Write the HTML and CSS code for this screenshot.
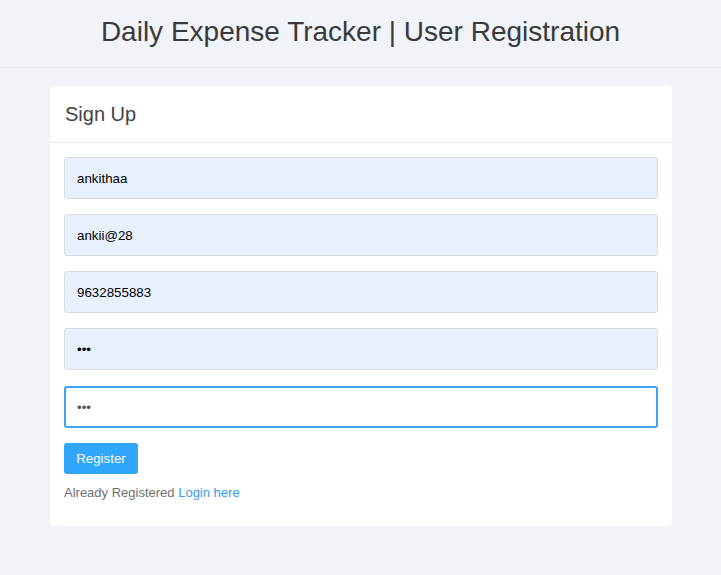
FILE: index.html
```html
<!DOCTYPE html>
<html>
<head>
<meta charset="utf-8">
<link rel="stylesheet" href="styles.css">
</head>
<body>
<header class="topbar">
  <h1 class="title">Daily Expense Tracker | User Registration</h1>
</header>
<main class="wrap">
  <section class="card">
    <div class="card-head">Sign Up</div>
    <form class="card-body">
      <input class="field" type="text" value="ankithaa">
      <input class="field" type="text" value="ankii@28">
      <input class="field" type="text" value="9632855883">
      <input class="field" type="password" value="abc">
      <input class="field focus" type="password" value="abc">
      <button class="btn" type="button">Register</button>
      <p class="note">Already Registered <a href="#" class="link">Login here</a></p>
    </form>
  </section>
</main>
</body>
</html>
```

FILE: styles.css
```css
html, body {
  margin: 0;
  padding: 0;
}
body {
  background: #f0f3f7;
  font-family: "Liberation Sans", Arial, sans-serif;
  color: #333;
}
.topbar {
  height: 67px;
  border-bottom: 1px solid #e4e8ec;
  display: flex;
  align-items: center;
  justify-content: center;
}
.title {
  margin: 0;
  font-weight: normal;
  font-size: 28px;
  color: #3a3a3a;
  position: relative;
  top: -2px;
}
.wrap {
  padding: 18px 49px 0 50px;
}
.card {
  background: #fff;
  border-radius: 4px;
  box-shadow: 0 1px 1px rgba(0,0,0,0.06);
  width: 622px;
  height: 440px;
}
.card-head {
  height: 57px;
  box-sizing: border-box;
  padding: 17px 15px 0;
  font-size: 20px;
  color: #444;
  border-bottom: 1px solid #e8e9ec;
}
.card-body {
  padding: 14px 14px 0 14px;
  display: flex;
  flex-direction: column;
  align-items: flex-start;
}
.field {
  box-sizing: border-box;
  width: 594px;
  height: 42px;
  margin: 0 0 15px 0;
  padding: 0 12px;
  border: 1px solid #d8dbe0;
  border-radius: 3px;
  background: #e8f0fe;
  font-family: "Liberation Sans", Arial, sans-serif;
  font-size: 13.333px;
  color: #000;
  outline: none;
}
.field.focus {
  margin-top: 1px;
  background: #fff;
  border: 2px solid #3aa5f7;
  padding: 0 11px;
  color: #555;
}
.btn {
  height: 31px;
  width: 74px;
  background: #2ea6fc;
  color: #fff;
  border: none;
  border-radius: 3px;
  font-family: "Liberation Sans", Arial, sans-serif;
  font-size: 13.333px;
  padding: 0;
}
.note {
  margin: 11px 0 0 0;
  font-size: 13px;
  color: #6f6f6f;
}
.link {
  color: #3a9cf2;
  text-decoration: none;
}
```
